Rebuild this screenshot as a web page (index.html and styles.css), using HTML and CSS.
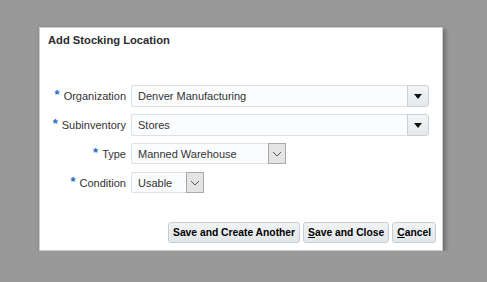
FILE: index.html
```html
<!DOCTYPE html>
<html lang="en">
<head>
    <meta charset="UTF-8">
    <title>Add Stocking Location</title>
    <link rel="stylesheet" href="styles.css">
</head>
<body>

<div class="dialog">
    <div class="dialog-title">Add Stocking Location</div>

    <div class="form">
        <label class="label"><span class="req">*</span> Organization</label>
        <div class="choice">
            <div class="choice-text">Denver Manufacturing</div>
            <div class="lov-btn"><span class="tri"></span></div>
        </div>

        <label class="label"><span class="req">*</span> Subinventory</label>
        <div class="choice">
            <div class="choice-text">Stores</div>
            <div class="lov-btn"><span class="tri"></span></div>
        </div>

        <label class="label"><span class="req">*</span> Type</label>
        <div class="choice choice-type">
            <div class="choice-text">Manned Warehouse</div>
            <div class="sel-btn">
                <svg width="10" height="6" viewBox="0 0 10 6"><path d="M1 1 L5 5 L9 1" fill="none" stroke="#555" stroke-width="1"/></svg>
            </div>
        </div>

        <label class="label"><span class="req">*</span> Condition</label>
        <div class="choice choice-cond">
            <div class="choice-text">Usable</div>
            <div class="sel-btn">
                <svg width="10" height="6" viewBox="0 0 10 6"><path d="M1 1 L5 5 L9 1" fill="none" stroke="#555" stroke-width="1"/></svg>
            </div>
        </div>
    </div>

    <div class="buttons">
        <button class="btn">Save and Create Another</button>
        <button class="btn"><u>S</u>ave and Close</button>
        <button class="btn"><u>C</u>ancel</button>
    </div>
</div>

</body>
</html>
```

FILE: styles.css
```css
body {
    margin: 0;
    background: #999999;
    font-family: 'Liberation Sans', Arial, sans-serif;
    color: #333;
}
.dialog {
    box-sizing: border-box;
    width: 404px;
    height: 224px;
    margin: 27px 0 0 39px;
    padding: 6px 0 0 8px;
    background: #fff;
    border: 1px solid #c6cfd6;
    box-shadow: 2px 2px 5px rgba(0, 0, 0, 0.35);
}
.dialog-title {
    font-size: 11.2px;
    font-weight: bold;
    line-height: 13px;
    color: #2c2c2c;
}
.form {
    display: grid;
    grid-template-columns: 78px 298px;
    column-gap: 5px;
    row-gap: 7px;
    margin-top: 38px;
    font-size: 11px;
}
.label {
    display: flex;
    align-items: center;
    justify-content: flex-end;
    white-space: nowrap;
    color: #333;
}
.req {
    color: #1c6fc6;
    font-size: 13px;
    font-weight: bold;
    margin-right: 4px;
    position: relative;
    top: -2px;
}
.choice {
    display: flex;
    height: 22px;
}
.choice-type,
.choice-cond {
    height: 21px;
    margin-bottom: 1px;
}
.choice-type {
    width: 155px;
}
.choice-cond {
    width: 73px;
}
.choice-text {
    flex: 1;
    box-sizing: border-box;
    display: flex;
    align-items: center;
    padding-left: 6px;
    background: #fbfcfd;
    border: 1px solid #dbe1e5;
    border-right: none;
    border-radius: 2px 0 0 2px;
    color: #333;
}
.lov-btn {
    box-sizing: border-box;
    width: 22px;
    display: flex;
    align-items: center;
    justify-content: center;
    background: linear-gradient(#f3f5f6, #e5e9eb);
    border: 1px solid #c9d0d5;
    border-radius: 0 3px 3px 0;
}
.tri {
    width: 0;
    height: 0;
    border-left: 4px solid transparent;
    border-right: 4px solid transparent;
    border-top: 5px solid #111;
}
.sel-btn {
    box-sizing: border-box;
    width: 18px;
    display: flex;
    align-items: center;
    justify-content: center;
    background: #e4e4e4;
    border: 1px solid #a9a9a9;
}
.buttons {
    display: flex;
    justify-content: flex-end;
    gap: 3px;
    margin-top: 28px;
    padding-right: 6px;
}
.btn {
    height: 21px;
    padding: 0 4px;
    font-family: 'Liberation Sans', Arial, sans-serif;
    font-size: 10.3px;
    font-weight: bold;
    color: #000;
    background: linear-gradient(#f1f3f4, #e2e7ea);
    border: 1px solid #c5ced5;
    border-radius: 3px;
}
```
